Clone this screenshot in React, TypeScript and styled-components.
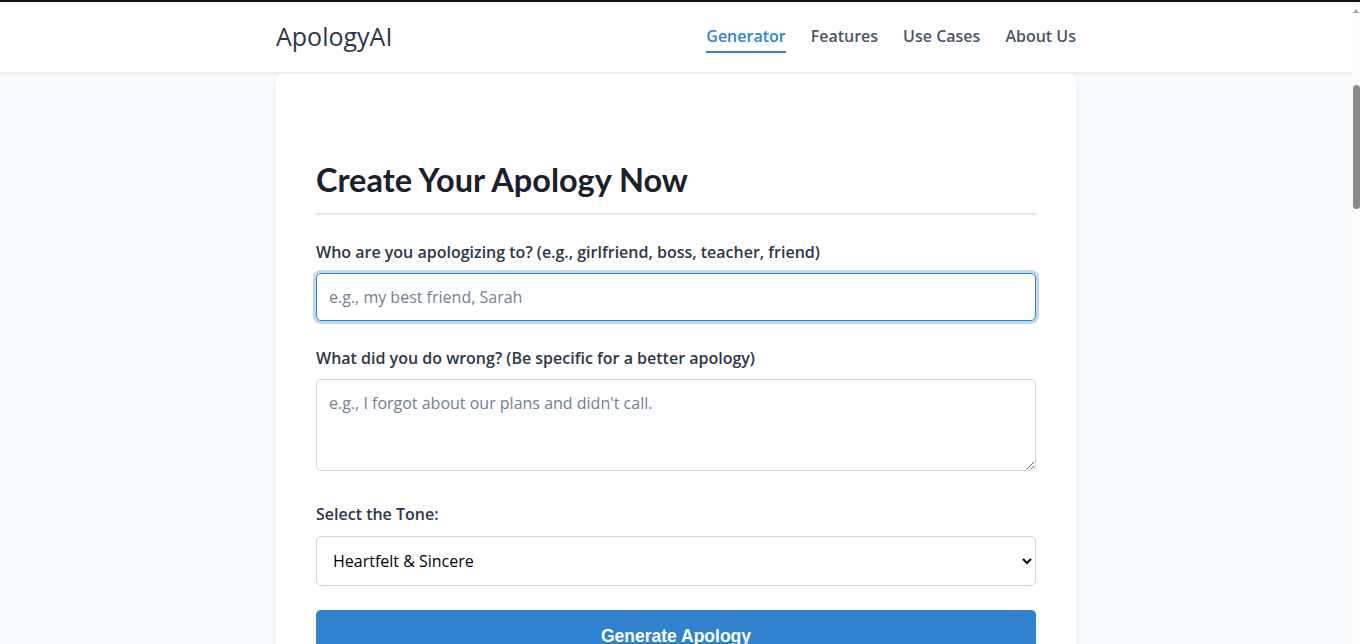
import React, {useState} from "react";
import styled, {createGlobalStyle} from "styled-components";

const GlobalStyle = createGlobalStyle`
  * {
    box-sizing: border-box;
  }
  body {
    margin: 0;
    padding-right: 8px;
    background-color: #f7fafc;
    font-family: "Open Sans", "Noto Sans", sans-serif;
    color: #2d3748;
    border-top: 2px solid #111;
  }
`

// window scrollbar as it shows in the picture
const ScrollTrack = styled.div`
  position: fixed;
  top: 2px;
  right: 0;
  bottom: 0;
  width: 8px;
  background-color: #fbfbfb;

  &::before {
    content: "";
    position: absolute;
    top: 7px;
    left: 1px;
    border-left: 3px solid transparent;
    border-right: 3px solid transparent;
    border-bottom: 4px solid #a3a3a3;
  }
`

const ScrollThumb = styled.div`
  position: absolute;
  top: 83px;
  left: 1px;
  width: 7px;
  height: 124px;
  border-radius: 4px;
  background-color: #8a8a8a;
`

const Header = styled.header`
  background-color: #ffffff;
  box-shadow: 0 2px 4px rgba(0, 0, 0, 0.06);
  height: 70px;
`

const HeaderInner = styled.div`
  max-width: 800px;
  height: 100%;
  margin: 0 auto;
  display: flex;
  align-items: center;
  justify-content: space-between;
`

const Logo = styled.div`
  font-size: 25px;
  font-weight: 500;
  color: #2d3748;
  margin-top: -2px;
`

const Nav = styled.nav`
  display: flex;
  gap: 25px;
  align-self: stretch;
  align-items: center;
`

const NavLink = styled.a<{$active?: boolean}>`
  font-size: 16px;
  font-weight: 600;
  text-decoration: none;
  color: ${props => (props.$active ? "#3182ce" : "#4a5568")};
  padding: 4px 0 4px;
  border-bottom: 2px solid ${props => (props.$active ? "#3182ce" : "transparent")};
  cursor: pointer;
`

const Main = styled.main`
  max-width: 800px;
  margin: 2px auto 40px;
`

const Card = styled.section`
  background-color: #ffffff;
  border-radius: 8px;
  box-shadow: 0 4px 10px rgba(0, 0, 0, 0.05);
  padding: 40px;
`

const Title = styled.h2`
  font-family: "Lato", "Noto Sans", sans-serif;
  font-size: 32.5px;
  font-weight: 700;
  color: #1a202c;
  margin: 46px 0 24px;
  padding-bottom: 14px;
  border-bottom: 2px solid #e2e8f0;
  line-height: 1.2;
`

const Field = styled.div`
  margin-bottom: 24px;
`

const Label = styled.label`
  display: block;
  font-size: 16px;
  font-weight: 600;
  color: #2d3748;
  margin-bottom: 8px;
  line-height: 26px;
`

const TextInput = styled.input<{$focused?: boolean}>`
  width: 100%;
  height: 48px;
  padding: 12px;
  font-family: inherit;
  font-size: 16px;
  color: #2d3748;
  border: 1px solid ${props => (props.$focused ? "#3182ce" : "#cbd5e0")};
  border-radius: 5px;
  outline: none;
  box-shadow: ${props => (props.$focused ? "0 0 0 3px rgba(49, 130, 206, 0.3)" : "none")};

  &::placeholder {
    color: #718096;
  }
`

const TextArea = styled.textarea`
  width: 100%;
  height: 92px;
  padding: 12px;
  margin-bottom: 1px;
  font-family: inherit;
  font-size: 16px;
  color: #2d3748;
  border: 1px solid #cbd5e0;
  border-radius: 5px;
  outline: none;
  resize: vertical;

  &::placeholder {
    color: #718096;
  }
`

const Select = styled.select`
  width: 100%;
  height: 50px;
  padding: 0 12px;
  margin-top: 1px;
  font-family: inherit;
  font-size: 16px;
  color: #000;
  background-color: #fff;
  border: 1px solid #cbd5e0;
  border-radius: 5px;
  outline: none;
`

const Button = styled.button`
  width: 100%;
  height: 52px;
  border: none;
  border-radius: 5px;
  background-color: #3182ce;
  color: #ffffff;
  font-family: "Liberation Sans", Arial, sans-serif;
  font-size: 17.5px;
  font-weight: 700;
  cursor: pointer;
`

const App = () => {
    const [recipient, setRecipient] = useState("");
    const [mistake, setMistake] = useState("");
    const [tone, setTone] = useState("heartfelt");

    return (
        <>
            <GlobalStyle/>
            <Header>
                <HeaderInner>
                    <Logo>ApologyAI</Logo>
                    <Nav>
                        <NavLink $active>Generator</NavLink>
                        <NavLink>Features</NavLink>
                        <NavLink>Use Cases</NavLink>
                        <NavLink>About Us</NavLink>
                    </Nav>
                </HeaderInner>
            </Header>
            <Main>
                <Card>
                    <Title>Create Your Apology Now</Title>
                    <Field>
                        <Label>Who are you apologizing to? (e.g., girlfriend, boss, teacher, friend)</Label>
                        <TextInput
                            $focused
                            placeholder="e.g., my best friend, Sarah"
                            value={recipient}
                            onChange={e => setRecipient(e.currentTarget.value)}
                        />
                    </Field>
                    <Field>
                        <Label>What did you do wrong? (Be specific for a better apology)</Label>
                        <TextArea
                            placeholder="e.g., I forgot about our plans and didn't call."
                            value={mistake}
                            onChange={e => setMistake(e.currentTarget.value)}
                        />
                    </Field>
                    <Field>
                        <Label>Select the Tone:</Label>
                        <Select value={tone} onChange={e => setTone(e.currentTarget.value)}>
                            <option value="heartfelt">Heartfelt &amp; Sincere</option>
                            <option value="formal">Formal &amp; Professional</option>
                            <option value="funny">Funny &amp; Lighthearted</option>
                            <option value="short">Short &amp; Sweet</option>
                        </Select>
                    </Field>
                    <Button>Generate Apology</Button>
                </Card>
            </Main>
            <ScrollTrack>
                <ScrollThumb/>
            </ScrollTrack>
        </>
    )
}

export default App;
